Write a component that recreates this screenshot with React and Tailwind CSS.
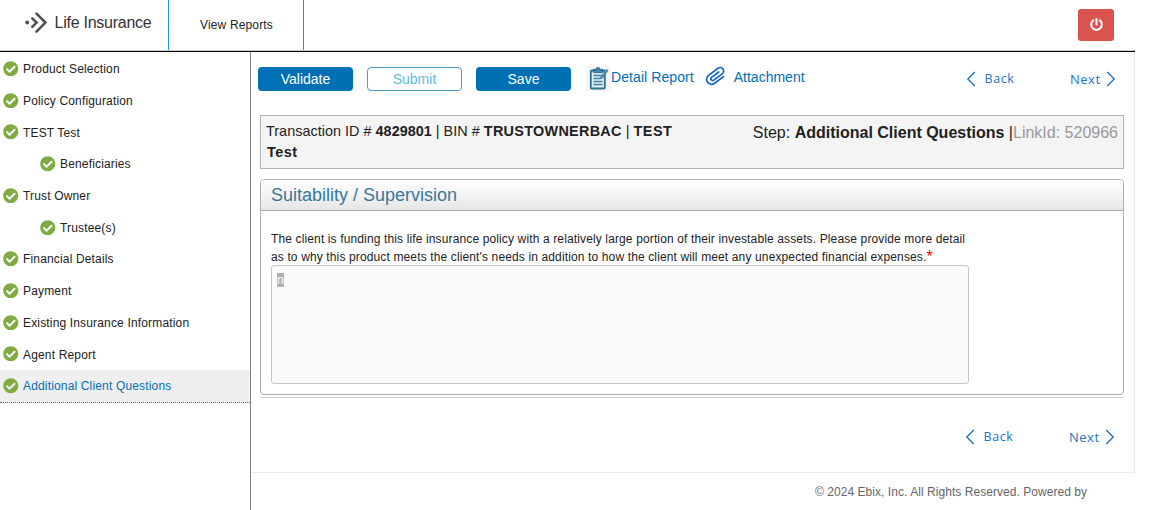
import React from 'react';
import { FaCheckCircle, FaPowerOff } from 'react-icons/fa';

const steps = [
  { label: 'Product Selection' },
  { label: 'Policy Configuration' },
  { label: 'TEST Test' },
  { label: 'Beneficiaries', nested: true },
  { label: 'Trust Owner' },
  { label: 'Trustee(s)', nested: true },
  { label: 'Financial Details' },
  { label: 'Payment' },
  { label: 'Existing Insurance Information' },
  { label: 'Agent Report' },
  { label: 'Additional Client Questions', active: true },
];

function Logo() {
  return (
    <svg className="h-[24px] w-[24px]" viewBox="0 0 24 24" fill="none" stroke="#505050" strokeWidth="2.6" strokeLinecap="round">
      <circle cx="3.2" cy="11.6" r="2" fill="#505050" stroke="none" />
      <path d="M8.300 7.300l4.300 4.300-4.300 4.300" />
      <path d="M12.500 2.600l8.900 9-8.900 9" />
    </svg>
  );
}

function ReportIcon() {
  return (
    <svg className="h-[25px] w-[25px] bg-[#f5f5f5]" viewBox="0 0 25 25" fill="none">
      <rect x="4.800" y="4.500" width="14" height="18" rx="1" fill="#e0eff5" stroke="#2b7294" strokeWidth="1.800" />
      <path d="M7.500 3.400h2.600a1.900 1.900 0 0 1 3.800 0h2.600v3.200h-9z" fill="#3c8aab" stroke="#1f5575" strokeWidth=".8" />
      <path d="M7.500 9.500h8M7.500 12.500h6.500M7.500 15.500h9M7.500 18.500h9" stroke="#3f83a2" strokeWidth="1.300" />
      <path d="M20.600 3.200l-5.600 7.200-.6 2.400 2.200-.9 5.400-7.200z" fill="#52a8c8" stroke="#1f5575" strokeWidth=".7" />
    </svg>
  );
}

function ClipIcon() {
  return (
    <svg className="h-[20px] w-[21px]" viewBox="0 0 21 20" fill="none" stroke="#1464c8" strokeWidth="1.700" strokeLinecap="round" strokeLinejoin="round">
      <path transform="rotate(-37 10.5 10)" d="M16.500 15.300H5.400a5 5 0 0 1 0-10h11.800a3.500 3.500 0 0 1 0 7H6.600a1.800 1.800 0 0 1 0-3.600h8.900" />
    </svg>
  );
}

function Chevron({ right }) {
  return (
    <svg className="h-[16px] w-[10px]" viewBox="0 0 10 16" fill="none" stroke="#1a6fc4" strokeWidth="1.3">
      <path d={right ? 'M1.200 1l7 7-7 7' : 'M8.800 1l-7 7 7 7'} />
    </svg>
  );
}

function Pager() {
  return (
    <div className="flex h-[18px] items-center font-['Open_Sans',sans-serif] text-[13px] leading-[18px] text-[#2474c6]">
      <Chevron />
      <span className="ml-[8.500px] w-[30.500px] whitespace-nowrap text-[12.500px] tracking-[0.600px]">Back</span>
      <span className="ml-[55px] w-[31px] whitespace-nowrap tracking-[0.500px]">Next</span>
      <span className="ml-[5px] mr-[1px]"><Chevron right /></span>
    </div>
  );
}

export default function App() {
  return (
    <div className="flex h-[510px] w-[1152px] flex-col overflow-hidden bg-white font-['Liberation_Sans',Arial,sans-serif] text-[12px] text-[#222]">
      <header className="flex h-[52px] w-[1135px] shrink-0 items-stretch border-b border-black">
        <div className="flex w-full border-b border-[#ccc]">
          <div className="flex w-[169px] items-start border-r border-[#1e96d7] pl-[24px] pt-[11px]">
            <Logo />
            <span className="ml-[6.500px] whitespace-nowrap text-[16px] leading-[24px] tracking-[-0.250px] text-[#333]">Life Insurance</span>
          </div>
          <div className="flex w-[135px] items-start justify-center border-r border-[#1e96d7] pl-[1px] pt-[16px] leading-[18px] tracking-[0.150px]">View Reports</div>
          <div className="ml-auto mr-[21px] mt-[9px] flex h-[32px] w-[36px] items-center justify-center rounded-[3px] bg-[#d9534f] pb-[1px] text-[13px] text-white">
            <FaPowerOff />
          </div>
        </div>
      </header>

      <div className="flex min-h-0 grow">
        <nav className="flex w-[251px] shrink-0 flex-col border-r border-[#808080] pt-[1px]">
          {steps.map((s) => (
            <div
              key={s.label}
              className={
                'flex shrink-0 items-center whitespace-nowrap tracking-[0.160px] ' +
                (s.nested ? 'pl-[40px] ' : 'pl-[3px] ') +
                (s.active ? 'h-[33px] border-b border-dotted border-[#666] bg-[#efefef] text-[#0070b4]' : 'h-[31.700px]')
              }
            >
              <FaCheckCircle className="h-[15.500px] w-[15.500px] text-[#80ab43]" />
              <span className="ml-[4.500px] pt-[1px]">{s.label}</span>
            </div>
          ))}
        </nav>

        <div className="flex w-[884px] flex-col">
          <main className="flex h-[421px] shrink-0 flex-col border-b border-r border-[#ececec]">
            <div className="flex h-[63px] shrink-0 items-start pl-[7px] text-[14px] text-[#0070b4]">
              <button className="mt-[15px] h-[24px] w-[95px] rounded-[4px] bg-[#0070b4] leading-[24px] text-white">Validate</button>
              <button className="ml-[14px] mt-[15px] h-[24px] w-[95px] rounded-[4px] border border-[#4a9bd0] leading-[22px] text-[#5bc0de]">Submit</button>
              <button className="ml-[14px] mt-[15px] h-[24px] w-[95px] rounded-[4px] bg-[#0070b4] leading-[24px] text-white">Save</button>
              <a className="ml-[15px] mt-[14px] flex whitespace-nowrap leading-[22px] tracking-[0.080px]"><ReportIcon />Detail Report</a>
              <a className="ml-[11px] mt-[14px] flex whitespace-nowrap leading-[22px]"><ClipIcon /><span className="ml-[8px]">Attachment</span></a>
              <div className="ml-auto mr-[17px] mt-[18px]"><Pager /></div>
            </div>

            <div className="ml-[9px] flex h-[54px] w-[864px] shrink-0 justify-between border border-[#b0b0b0] bg-[#f4f4f4] px-[5px]">
              <div className="w-[430px] pt-[5px] text-[14.400px] leading-[21px] tracking-[0.030px]">
                Transaction ID # <b>4829801</b> | BIN # <b className="tracking-[0.300px]">TRUSTOWNERBAC</b> | <b className="tracking-[0.500px]">TEST<br /><span className="pl-[1px]">Test</span></b>
              </div>
              <div className="whitespace-nowrap pt-[6px] text-[16px] leading-[21px]">
                Step: <b>Additional Client Questions</b> |<span className="text-[#999]">LinkId: 520966</span>
              </div>
            </div>

            <section className="ml-[9px] mt-[10px] flex h-[216px] w-[864px] shrink-0 flex-col rounded-[4px] border border-[#adadad]">
              <h2 className="h-[31px] rounded-t-[3px] border-b border-[#adadad] bg-gradient-to-b from-white to-[#e6e6e6] pl-[10px] text-[18px] leading-[30px] text-[#38789a]">Suitability / Supervision</h2>
              <div className="h-[54px] pl-[10px] pt-[19px] leading-[18px] tracking-[0.132px]">
                <p className="whitespace-nowrap">The client is funding this life insurance policy with a relatively large portion of their investable assets. Please provide more detail</p>
                <p className="whitespace-nowrap">as to why this product meets the client's needs in addition to how the client will meet any unexpected financial expenses.<span className="relative top-[1px] text-[16px] leading-none text-[#f00]">*</span></p>
              </div>
              <div className="ml-[10px] h-[119px] w-[698px] rounded-[3px] border border-[#c6c6c6] bg-[#fafafa] pl-[5px] pt-[7px]">
                <span className="block h-[14px] w-[7px] bg-[#b0b0b0] leading-[14px] text-white">n</span>
              </div>
            </section>
            <div className="ml-[9px] mt-[2px] w-[864px] border-t border-[#ccc]" />
            <div className="ml-auto mr-[18px] mt-[30px]"><Pager /></div>
          </main>
          <footer className="pl-[564px] pt-[10px] leading-[18px] tracking-[0.050px] text-[#666]">© 2024 Ebix, Inc. All Rights Reserved. Powered by</footer>
        </div>
      </div>
    </div>
  );
}
